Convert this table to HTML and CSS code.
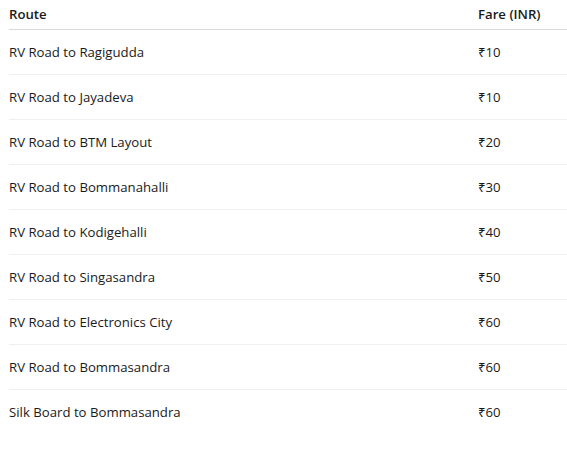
FILE: index.html
```
<!DOCTYPE html>
<html>
<head>
<meta charset="utf-8">
<link rel="stylesheet" href="styles.css">
</head>
<body>
<table class="fares">
  <thead>
    <tr><th class="route">Route</th><th class="fare">Fare (INR)</th></tr>
  </thead>
  <tbody>
    <tr><td>RV Road to Ragigudda</td><td>₹10</td></tr>
    <tr><td>RV Road to Jayadeva</td><td>₹10</td></tr>
    <tr><td>RV Road to BTM Layout</td><td>₹20</td></tr>
    <tr><td>RV Road to Bommanahalli</td><td>₹30</td></tr>
    <tr><td>RV Road to Kodigehalli</td><td>₹40</td></tr>
    <tr><td>RV Road to Singasandra</td><td>₹50</td></tr>
    <tr><td>RV Road to Electronics City</td><td>₹60</td></tr>
    <tr><td>RV Road to Bommasandra</td><td>₹60</td></tr>
    <tr><td>Silk Board to Bommasandra</td><td>₹60</td></tr>
  </tbody>
</table>
</body>
</html>
```
FILE: styles.css
```
html, body {
  margin: 0;
  padding: 0;
  background: #fff;
}
body {
  padding-left: 9px;
  font-family: "Open Sans", "Noto Sans", sans-serif;
  font-size: 13.2px;
  color: #1a1a1a;
}
.fares {
  border-collapse: collapse;
  width: 558px;
}
.fares th {
  text-align: left;
  font-weight: 600;
  line-height: 20px;
  padding: 4px 0 5px 0;
  border-bottom: 1px solid #d9d9d9;
}
.fares th.fare {
  width: 89px;
}
.fares td {
  line-height: 20px;
  padding: 12px 0 12px 0;
  border-bottom: 1px solid #f0f0f0;
}
.fares tbody tr:last-child td {
  border-bottom: none;
}
```
